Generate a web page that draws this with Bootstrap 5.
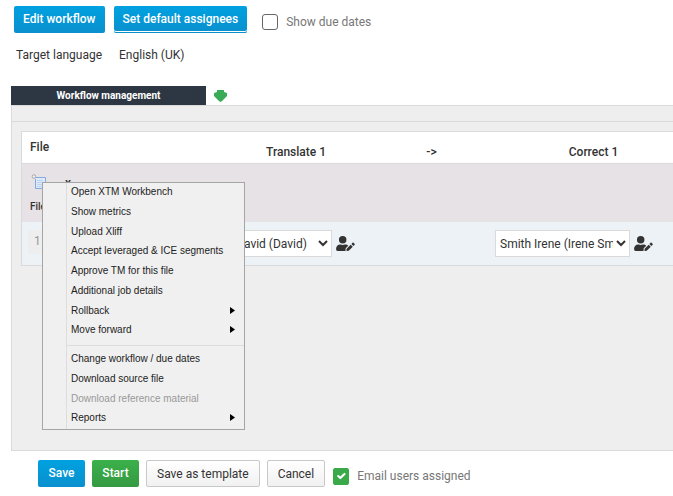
<!DOCTYPE html>
<html lang="en">
<head>
<meta charset="utf-8">
<meta name="viewport" content="width=device-width, initial-scale=1">
<title>Workflow management</title>
<link href="https://cdn.jsdelivr.net/npm/bootstrap@5.3.0/dist/css/bootstrap.min.css" rel="stylesheet">
<style>
body { font: 12px/18px Roboto, "Liberation Sans", sans-serif; color: #333; background: #fff; overflow-x: hidden; }
.btn { font-size: 12px; line-height: 18px; padding: 4px 10px; border-radius: 2px; height: 27px; white-space: nowrap; }
.btn-blue, .btn-go { color: #fff; font-weight: 500; border: 0; padding-bottom: 6px; }
.btn-blue { background: linear-gradient(#00a1e1, #0a8fcd); }
.btn-set { box-shadow: inset 0 -1px #0a8fcd, inset 0 -2px #fff; }
.btn-go { background: linear-gradient(#3bb04a, #359a43); }
.btn-plain { color: #333; border: 1px solid #c8c8c8; background: linear-gradient(#fff, #f1f1f1); }
.toolbar { padding: 6px 14px 0; gap: 9px; }
.toolbar .btn { padding-left: 9px; padding-right: 9px; }
.option { gap: 8px; color: #777; padding: 7px 0 0 6px; }
.footer-bar .option { padding-left: 1px; }
.option .form-check-input { width: 16px; height: 16px; margin: 0; border: 1px solid #666; border-radius: 3px; flex: none; }
.option .form-check-input:checked { background-color: #39a94a; border-color: #39a94a; height: 17px; border-radius: 2px; }
.language { padding: 13px 16px 0; gap: 17px; }
.tabs { margin: 22px 0 0 11px; gap: 8px; }
.tab-main { width: 195px; height: 19px; background: #2d3743; color: #fff; font-size: 10px; font-weight: 700; border: 0; padding: 0; line-height: 18px; }
.panel { margin-left: 11px; border: 1px solid #dadada; border-right: 0; background: #eee; }
.panel-strip { height: 16px; border-bottom: 1px solid #dadada; }
.panel-body { padding: 9px 0 184px 9px; overflow: hidden; }
.files { table-layout: fixed; width: 100%; min-width: 678px; border: 1px solid #dadada; border-collapse: separate; border-spacing: 0; }
.files th { height: 32px; background: #fff; font-weight: 500; padding: 6px 8px; line-height: 18px; vertical-align: top; border-bottom: 1px solid #dadada; }
.files th.step { padding-top: 11px; padding-bottom: 0; text-align: center; }
.files th.arrow { padding-right: 35px; }
.group-row td { height: 58px; background: #e7e2e6; padding: 10px 8px 0; vertical-align: top; }
.group-row p { font-size: 10px; font-weight: 500; line-height: 16px; margin: 7px 0 0; }
.file-mark { padding-left: 2px; font-weight: 500; }
.job-row td { height: 42px; background: #edf2f6; padding: 8px 6px; vertical-align: top; }
.job-num { width: 24px; height: 24px; background: #eee; color: #999; line-height: 22px; padding-left: 6px; }
.assignee { width: 135px; height: 27px; border: 1px solid #dadada; background: #fff; color: #333; font-size: 12px; padding: 0; border-radius: 0; }
.icon-btn { border: 0; background: none; padding: 0; line-height: 0; }
.context { position: absolute; left: 30px; top: 76px; width: 203px; border: 1px solid #a5a5a5; background: #f0f0f0; padding-left: 23px; font: 10px/17px "Liberation Sans", Arial, sans-serif; z-index: 5; }
.context ul { border-left: 1px solid #ddd; padding-left: 4px; padding-right: 9px; margin: 0; }
.context .first { height: 163px; padding-bottom: 4px; border-bottom: 1px solid #ddd; }
.context .second { height: 83px; padding-top: 4px; }
.context button { border: 0; background: none; padding: 0; color: #222; text-align: left; }
.context button:disabled { color: #999; }
.footer-bar { padding: 9px 38px; gap: 7px; }
.footer-bar .btn-blue, .footer-bar .btn-go { min-width: 47px; }
</style>
<script src="https://cdn.jsdelivr.net/npm/bootstrap@5.3.0/dist/js/bootstrap.bundle.min.js"></script>
</head>
<body>
<svg class="d-none" aria-hidden="true">
  <symbol id="user-edit" viewBox="0 0 640 512"><path d="M224 256A128 128 0 1 0 224 0a128 128 0 0 0 0 256zm89.600 32h-16.700a174 174 0 0 1-145.800 0h-16.700C60.200 288 0 348.200 0 422.400V464c0 26.500 21.500 48 48 48h274.900a48 48 0 0 1-2.600-21.300l6.800-60.900 1.200-11.100 7.900-7.900 77.300-77.300c-24.500-27.700-60-45.500-99.900-45.500zm45.300 145.300-6.800 61c-1.100 10.200 7.500 18.800 17.600 17.600l60.900-6.800 137.900-137.900-71.700-71.700-137.900 137.800zM633 268.900 595.100 231c-9.300-9.300-24.500-9.300-33.800 0l-37.800 37.800-4.100 4.100 71.800 71.700 41.800-41.800c9.300-9.400 9.300-24.500 0-33.900z"/></symbol>
</svg>
<header>
  <div class="toolbar d-flex align-items-start">
    <button type="button" class="btn btn-blue">Edit workflow</button>
    <button type="button" class="btn btn-blue btn-set">Set default assignees</button>
    <div class="option d-flex align-items-center">
      <input class="form-check-input" type="checkbox" id="due"><label for="due">Show due dates</label>
    </div>
  </div>
  <div class="language d-flex"><span>Target language</span><span>English (UK)</span></div>
</header>
<main>
  <div class="tabs d-flex">
    <button type="button" class="tab-main">Workflow management</button>
    <button type="button" class="icon-btn" aria-label="Expand"><svg width="13" height="12" viewBox="0 0 13 12"><path d="M3 0h7v2l3 1v3l-5 5-1.500 1L5 11 0 6V3l3-1z" fill="#38ab57"/></svg></button>
  </div>
  <section class="panel position-relative">
    <div class="panel-strip"></div>
    <div class="panel-body">
      <table class="files">
        <colgroup><col style="width:169px"><col style="width:210px"><col style="width:88px"><col></colgroup>
        <thead><tr><th>File</th><th class="step">Translate 1</th><th class="step arrow">-&gt;</th><th class="step">Correct 1</th></tr></thead>
        <tbody>
          <tr class="group-row"><td colspan="4">
            <div class="d-flex gap-3">
              <svg width="17" height="17" viewBox="0 0 17 17"><path d="M4 3.500h11.500v11H5.500V5" fill="#dceafa" stroke="#86a9d8"/><circle cx="4" cy="2.500" r="1.800" fill="#eee" stroke="#aaa"/><path d="M7 6.500h6M7 8.500h6M7 10.500h6M7 12.500h6" stroke="#b9d2f0"/></svg>
              <span class="file-mark">x</span>
            </div>
            <p>File</p>
          </td></tr>
          <tr class="job-row">
            <td><div class="job-num">1</div></td>
            <td><div class="d-flex align-items-center gap-1">
              <select class="assignee" aria-label="Translate 1 assignee"><option>Smith David (David)</option></select>
              <button type="button" class="icon-btn" aria-label="Edit translator"><svg width="19" height="15" fill="#333"><use href="#user-edit"/></svg></button>
            </div></td>
            <td></td>
            <td><div class="d-flex align-items-center gap-1">
              <select class="assignee" aria-label="Correct 1 assignee"><option>Smith Irene (Irene Smith)</option></select>
              <button type="button" class="icon-btn" aria-label="Edit corrector"><svg width="19" height="15" fill="#333"><use href="#user-edit"/></svg></button>
            </div></td>
          </tr>
        </tbody>
      </table>
    </div>
    <nav class="context" aria-label="File actions">
      <ul class="first list-unstyled d-flex flex-column">
        <li class="flex-fill"><button type="button">Open XTM Workbench</button></li>
        <li class="flex-fill"><button type="button">Show metrics</button></li>
        <li class="flex-fill"><button type="button">Upload Xliff</button></li>
        <li class="flex-fill"><button type="button">Accept leveraged &amp; ICE segments</button></li>
        <li class="flex-fill"><button type="button">Approve TM for this file</button></li>
        <li class="flex-fill"><button type="button">Additional job details</button></li>
        <li class="flex-fill"><button type="button" class="d-flex w-100 justify-content-between align-items-center">Rollback <svg width="5" height="7"><path d="M0 0l5 3.500L0 7z"/></svg></button></li>
        <li class="flex-fill"><button type="button" class="d-flex w-100 justify-content-between align-items-center">Move forward <svg width="5" height="7"><path d="M0 0l5 3.500L0 7z"/></svg></button></li>
      </ul>
      <ul class="second list-unstyled d-flex flex-column">
        <li class="flex-fill"><button type="button">Change workflow / due dates</button></li>
        <li class="flex-fill"><button type="button">Download source file</button></li>
        <li class="flex-fill"><button type="button" disabled>Download reference material</button></li>
        <li class="flex-fill"><button type="button" class="d-flex w-100 justify-content-between align-items-center">Reports <svg width="5" height="7"><path d="M0 0l5 3.500L0 7z"/></svg></button></li>
      </ul>
    </nav>
  </section>
</main>
<footer class="footer-bar d-flex align-items-start">
  <button type="button" class="btn btn-blue">Save</button>
  <button type="button" class="btn btn-go">Start</button>
  <button type="button" class="btn btn-plain">Save as template</button>
  <button type="button" class="btn btn-plain">Cancel</button>
  <div class="option d-flex align-items-center">
    <input class="form-check-input" type="checkbox" id="mail" checked><label for="mail">Email users assigned</label>
  </div>
</footer>
</body>
</html>
